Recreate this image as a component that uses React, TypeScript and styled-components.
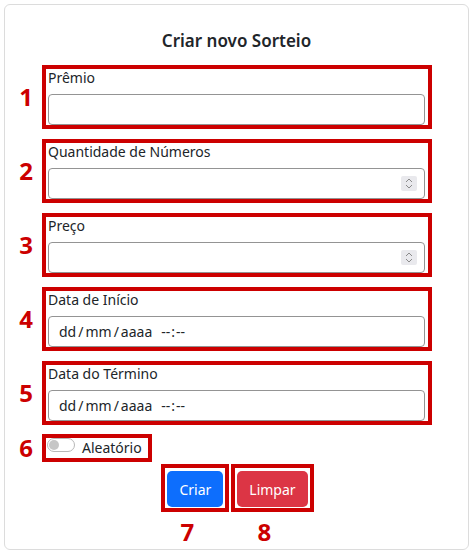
import { createGlobalStyle, styled } from "styled-components";

const GlobalStyle = createGlobalStyle`
  html, body {
    margin: 0;
    padding: 0;
    background: #ffffff;
  }
  body {
    font-family: "Noto Sans", "Liberation Sans", Arial, sans-serif;
    color: #212529;
  }
  * {
    box-sizing: border-box;
  }
`;

const Card = styled.div`
  margin: 4px 0 0 4px;
  width: 465px;
  height: 546px;
  border: 1px solid #dcdcdc;
  border-radius: 6px;
  padding-top: 24px;
  background: #fff;
`;

const Title = styled.h5`
  margin: 0 0 12px 0;
  font-size: 17px;
  line-height: 24px;
  font-weight: 600;
  text-align: center;
  color: #212529;
`;

const Fields = styled.div`
  display: flex;
  flex-direction: column;
  gap: 10px;
`;

const Row = styled.div`
  display: flex;
  align-items: center;
`;

// numero vermelho da anotacao
const Num = styled.div`
  width: 37px;
  padding-right: 9px;
  text-align: right;
  font-size: 24px;
  line-height: 24px;
  font-weight: 700;
  color: #cc0000;
`;

const Mark = styled.div<{ $w?: number }>`
  width: ${(p) => p.$w ?? 390}px;
  border: 4px solid #cc0000;
  background: #fff;
`;

const FieldBox = styled(Mark)`
  padding: 0 3px 0 2px;
`;

const Label = styled.label`
  display: block;
  font-size: 14px;
  line-height: 17px;
  margin-bottom: 8px;
  color: #212529;
`;

const InputWrap = styled.div`
  position: relative;
  width: 377px;
`;

const Input = styled.input`
  display: block;
  width: 377px;
  height: 31px;
  border: 1px solid #949494;
  border-radius: 4px;
  padding: 0 6px 0 10px;
  font-family: inherit;
  font-size: 14px;
  color: #212529;
  background: #fff;
  outline: none;
  appearance: textfield;
  -moz-appearance: textfield;
  &::-webkit-inner-spin-button,
  &::-webkit-outer-spin-button {
    -webkit-appearance: none;
    margin: 0;
  }
`;

// botao de subir/descer do input number (desenhado por cima)
const Spinner = styled.span`
  position: absolute;
  right: 8px;
  top: 8px;
  width: 16px;
  height: 15px;
  background: #e9e9ed;
  border-radius: 2px;
  display: flex;
  align-items: center;
  justify-content: center;
`;

const DateBox = styled.div`
  display: flex;
  align-items: center;
  width: 377px;
  height: 31px;
  border: 1px solid #949494;
  border-radius: 4px;
  padding-left: 10px;
  font-size: 14px;
  color: #212529;
`;

const Sep = styled.span`
  margin: 0 2px;
`;

const TimePart = styled.span`
  margin-left: 9px;
`;

const Colon = styled.span`
  margin: 0 1px;
`;

const ToggleRow = styled(Row)`
  margin-top: 9px;
`;

const ToggleBox = styled(Mark)`
  display: flex;
  align-items: flex-start;
  gap: 7px;
  height: 28px;
  padding-left: 1px;
`;

const Track = styled.span`
  position: relative;
  display: inline-block;
  width: 28px;
  height: 14px;
  border: 1px solid #b8b8b8;
  border-radius: 7px;
  background: #fff;
  &::after {
    content: "";
    position: absolute;
    left: 1px;
    top: 1px;
    width: 10px;
    height: 10px;
    border-radius: 50%;
    background: #c6c6c6;
  }
`;

const ToggleText = styled.span`
  font-size: 14px;
  line-height: 18px;
  margin-top: 1px;
`;

const Actions = styled.div`
  display: flex;
  justify-content: center;
  gap: 2px;
  margin-top: 2px;
  padding-left: 2px;
`;

const ActionCol = styled.div`
  display: flex;
  flex-direction: column;
  align-items: center;
`;

const ButtonBox = styled.div`
  border: 4px solid #cc0000;
  padding: 3px 2px 1px 2px;
`;

const Button = styled.button<{ $variant: "primary" | "danger" }>`
  height: 36px;
  padding: 0 12px;
  border: none;
  border-radius: 5px;
  font-family: inherit;
  font-size: 14px;
  color: #fff;
  background: ${(p) => (p.$variant === "primary" ? "#0d6efd" : "#dc3545")};
`;

const BottomNum = styled.div`
  margin-top: 8px;
  margin-right: 16px;
  font-size: 24px;
  line-height: 24px;
  font-weight: 700;
  color: #cc0000;
`;

const fields = [
  { n: "1", label: "Prêmio", type: "text" },
  { n: "2", label: "Quantidade de Números", type: "number" },
  { n: "3", label: "Preço", type: "number" },
  { n: "4", label: "Data de Início", type: "date" },
  { n: "5", label: "Data do Término", type: "date" },
];

function SpinIcon() {
  return (
    <svg width="8" height="11" viewBox="0 0 8 11" fill="none" stroke="#8a8a8a" strokeWidth="1">
      <path d="M1 4 L4 1 L7 4" />
      <path d="M1 7 L4 10 L7 7" />
    </svg>
  );
}

function App() {
  return (
    <>
      <GlobalStyle />
      <Card>
        <Title>Criar novo Sorteio</Title>
        <Fields>
          {fields.map((f) => (
            <Row key={f.n}>
              <Num>{f.n}</Num>
              <FieldBox>
                <Label>{f.label}</Label>
                {f.type === "date" ? (
                  <DateBox>
                    dd<Sep>/</Sep>mm<Sep>/</Sep>aaaa
                    <TimePart>
                      --<Colon>:</Colon>--
                    </TimePart>
                  </DateBox>
                ) : (
                  <InputWrap>
                    <Input type={f.type} />
                    {f.type === "number" ? (
                      <Spinner>
                        <SpinIcon />
                      </Spinner>
                    ) : null}
                  </InputWrap>
                )}
              </FieldBox>
            </Row>
          ))}
        </Fields>
        <ToggleRow>
          <Num>6</Num>
          <ToggleBox $w={110}>
            <Track />
            <ToggleText>Aleatório</ToggleText>
          </ToggleBox>
        </ToggleRow>
        <Actions>
          <ActionCol>
            <ButtonBox>
              <Button $variant="primary">Criar</Button>
            </ButtonBox>
            <BottomNum>7</BottomNum>
          </ActionCol>
          <ActionCol>
            <ButtonBox>
              <Button $variant="danger">Limpar</Button>
            </ButtonBox>
            <BottomNum>8</BottomNum>
          </ActionCol>
        </Actions>
      </Card>
    </>
  );
}

export default App;
